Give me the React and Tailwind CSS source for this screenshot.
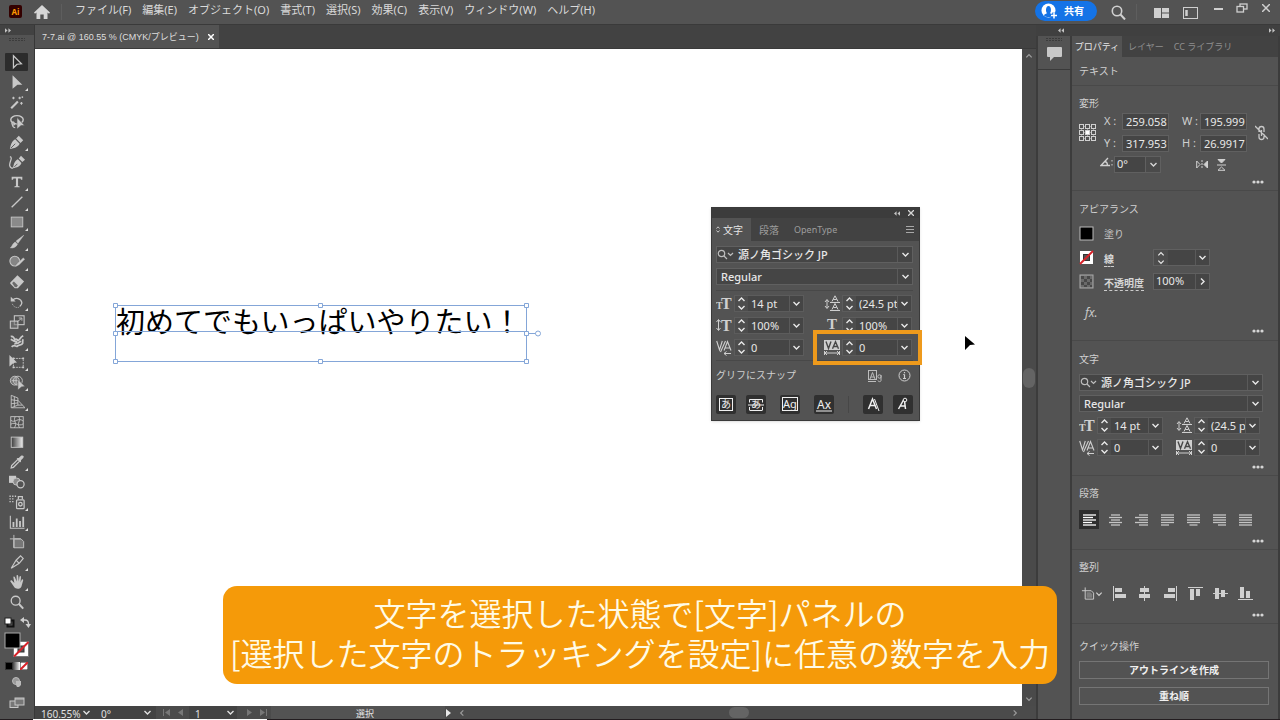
import React from 'react';

/* ---------- small shared drawings ---------- */

const Chevron = ({ dir = 'down', size = 9 }) => {
  const d = {
    down: 'M1.5 3 L4.5 6 L7.5 3',
    up: 'M1.5 6 L4.5 3 L7.5 6',
    right: 'M3 1.5 L6 4.5 L3 7.5',
    left: 'M6 1.5 L3 4.5 L6 7.5',
  }[dir];
  return (
    <svg width={size} height={size} viewBox="0 0 9 9" fill="none" stroke="currentColor" strokeWidth="1.4" aria-hidden="true">
      <path d={d} />
    </svg>
  );
};

const DoubleArrow = ({ left }) => (
  <svg width="6" height="5" viewBox="0 0 7 5" fill="#c4c4c4" aria-hidden="true">
    <path d={left ? 'M3 0v5L0 2.5zM7 0v5L4 2.5z' : 'M0 0v5l3-2.5zM4 0v5l3-2.5z'} />
  </svg>
);

const Grip = () => (
  <svg width="16" height="4" viewBox="0 0 16 4" stroke="#3c3c3c" strokeDasharray="2 1" aria-hidden="true">
    <path d="M0 .5h16M0 2.5h16" />
  </svg>
);

const Glyph = ({ x, y, size, children, bold = true, serif = true, fill = 'currentColor' }) => (
  <text
    x={x}
    y={y}
    fontSize={size}
    fontWeight={bold ? 700 : 400}
    fontFamily={serif ? 'Liberation Serif, serif' : 'Noto Sans, Noto Sans CJK JP, sans-serif'}
    fill={fill}
    stroke="none"
  >
    {children}
  </text>
);

/* ---------- tool bar ---------- */

const pen = 'M1 17 C2 12 3 8 7 6 L12 11 C10 15 6 16 1 17Z M8 5 L11 2 L16 7 L13 10Z';

const tools = [
  ['選択ツール', <path d="M5 2 L14 11 L9 11.500 L5 15.500Z" fill="none" strokeWidth="1.400" />, false],
  ['ダイレクト選択ツール', <path d="M4 1.500 L15 12 L9.500 12 L4 16.500Z" fill="currentColor" stroke="none" />, true],
  ['自動選択ツール', <><path d="M2.500 16 L10 8.500" strokeWidth="2.400" /><path d="M12 3v3M10.500 4.500h3M5 3v3M3.500 4.500h3M14 9v3M12.500 10.500h3" strokeWidth="1.200" /><circle cx="15" cy="3.500" r="1" fill="currentColor" stroke="none" /></>, false],
  ['なげなわツール', <><ellipse cx="9" cy="6.500" rx="7" ry="4.700" strokeWidth="1.600" /><path d="M4 9 C2 11 4 13 6 12 C7 10 4 7.500 3.500 10 C3.500 14 5 15 7 15.500" strokeWidth="1.300" /><path d="M9 4 L17.500 13 L13.500 13 L9 17Z" fill="currentColor" stroke="#535353" strokeWidth=".6" /></>, false],
  ['ペンツール', <><path d={pen} fill="currentColor" stroke="none" /><path d="M2 16 L7 11" stroke="#535353" /></>, true],
  ['曲線ツール', <><path d="M4.500 16 C5.500 10 7 7.500 10 6 L14 10 C12.500 14 9 15 4.500 16Z M11 5 L13.500 2 L18 6.500 L15 9Z" fill="currentColor" stroke="none" /><path d="M6 14.500L9.500 11" stroke="#535353" /><path d="M1 3 C5 4 0 9 .8 13 C1.500 16 3 16 4.500 16" strokeWidth="1.400" /></>, false],
  ['文字ツール', <path d="M3 3h12v3.500h-1.500l-.5-1.500h-2.800v8.500l1.800.5v1H6v-1l1.800-.5V5H5l-.5 1.500H3z" fill="currentColor" stroke="none" />, true],
  ['直線ツール', <path d="M3 15 L15 3" strokeWidth="1.500" />, true],
  ['長方形ツール', <rect x="2.500" y="3.500" width="13" height="11" fill="#8a8a8a" />, true],
  ['ブラシツール', <path d="M16.500 1.500 L8 8 L10 10.500Z M7 9 L9.500 11.500 C8 15 5 16 1.500 15.500 C4 14 3.500 11 7 9Z" fill="currentColor" strokeWidth=".6" />, true],
  ['塗りブラシツール', <><circle cx="6.500" cy="8" r="5.500" fill="#858585" strokeWidth="1.200" /><path d="M7 13 L10 9.500 L16 4 L18 6 L11.500 12.500 L6 15Z" fill="currentColor" stroke="#535353" strokeWidth=".4" /></>, true],
  ['消しゴムツール', <><path d="M9.500 1.500 L17 8.500 L10 16 L6.500 16 L1.500 11 L1.500 9.500Z" fill="currentColor" stroke="none" /><path d="M3.500 10 L5.500 8.500 L10 13 L8.500 14.800 L6.500 14.500Z" fill="#6a6a6a" stroke="none" /></>, true],
  ['回転ツール', <><path d="M4 7 A6 6 0 0 1 14.500 10 A6 6 0 0 1 12 14" strokeWidth="1.400" /><path d="M11 15 A6 6 0 0 1 3.500 10" strokeDasharray="1.200 1.200" /><path d="M2 3v5.500h5.500z" fill="currentColor" stroke="none" /></>, true],
  ['拡大・縮小ツール', <><rect x="6" y="2" width="11" height="10" strokeWidth="1.200" /><rect x="1.500" y="8" width="8.500" height="8" fill="#777" fillOpacity=".6" strokeWidth="1.200" /><path d="M9 9 L14 5 M11 4.500 h3.500 v3" /></>, true],
  ['線幅ツール', <path d="M2 3 C4 2 6 4 6.500 6.500 C8 5 9.500 6 9.500 7.500 C12 7.500 12 4 16 2 M16 6 C14 9 17 9 14.500 11.500 C12 13 11 12 9.500 13.500 C8 15 6 11 3 14.500 M2 6 C5 8 7 9 9 9 M6 11 C9 11 12 9.500 13.500 8" fill="none" strokeWidth="2" />, true],
  ['自由変形ツール', <><rect x="5" y="5" width="11" height="10" strokeDasharray="2 1" /><path d="M4 4h2v2H4zM15 4h2v2h-2zM15 14h2v2h-2zM4 14h2v2H4z" fill="currentColor" stroke="none" /><path d="M.5 1 L9 9.500 L5 10 L.5 14Z" fill="currentColor" stroke="none" /></>, true],
  ['シェイプ形成ツール', <><circle cx="6.500" cy="7.500" r="5" fill="#777" /><circle cx="10" cy="7.500" r="5" /><path d="M3 7.500h9M8 3v9" /><path d="M10 6 L18 14 L14 14.500 L10 18Z" fill="currentColor" stroke="#535353" strokeWidth=".6" /></>, true],
  ['遠近グリッドツール', <path d="M2.500 1.500v14M2.500 1.500 L10 4.500v8L2.500 15.500M6 3v11M2.500 6.500l7.500 1M2.500 11l7.500-1M10 7l8 8.500H3M10 12.500h5" />, true],
  ['メッシュツール', <><rect x="2" y="3" width="14" height="12.500" /><path d="M2 7 C7 11 10 3 16 8 M2 11.500 C7 8 11 15 16 11 M7 3 C4 8 10 10 6 15.500 M11 3 C14 8 8 10 12 15.500" /></>, false],
  ['グラデーションツール', <><defs><linearGradient id="toolGrad"><stop offset="0" stopColor="#3a3a3a" /><stop offset="1" stopColor="#eee" /></linearGradient></defs><rect x="2.500" y="3.500" width="13" height="11.500" fill="url(#toolGrad)" /></>, false],
  ['スポイトツール', <><path d="M10 6 L12 8 L5 15 L2.500 15.500 L3 13Z" strokeWidth="1.500" /><path d="M8.500 4.500 L11 4.500 L13.500 2 C16 1 17.500 3 16 4.500 L13.500 7 L13.500 9.500Z" fill="currentColor" stroke="none" /></>, true],
  ['ブレンドツール', <><rect x="0" y="2" width="8" height="8" fill="currentColor" stroke="none" /><circle cx="8.500" cy="8.500" r="4" fill="#8a8a8a" /><circle cx="13" cy="11.500" r="4" fill="#535353" strokeWidth="1.400" /></>, false],
  ['シンボルスプレーツール', <><rect x="8.500" y="6.500" width="8.500" height="10" rx="1" strokeWidth="1.400" /><path d="M10.500 6V3h4.500V6" strokeWidth="1.400" /><circle cx="12.800" cy="11.500" r="2" strokeWidth="1.500" /><path d="M.5 2.500h7.500M.5 5.500h6M.5 8.500h6" strokeDasharray="1.500 1.500" strokeWidth="1.500" /></>, true],
  ['棒グラフツール', <><path d="M1.500 2v14h16" strokeWidth="1.200" /><path d="M5 14.500V9M8.700 14.500V5M12.400 14.500V8M16 14.500V3" strokeWidth="2" /></>, true],
  ['アートボードツール', <><path d="M5.500 6v9.500h11V8.500l-3-3H6" fill="#777" /><path d="M5.500 1v14.500M1 5.500h12" /></>, false],
  ['スライスツール', <path d="M2.500 16 L8 7 L13 2 L16 5 L11.500 10.500Z M8 7 L11.500 10.500" strokeWidth="1.300" />, true],
  ['手のひらツール', <path d="M6 10 L3 7 C1.500 6.500 1 8 2 9 L6 15 C7 17 13 17.500 14 14 L16 7 C16 5.500 14.500 5.500 14 7 L13 9.500 L13.500 3.500 C13.500 2 12 2 11.700 3.500 L11 8.500 L10.300 2 C10 .7 8.300 1 8.500 2.500 L8.700 8.500 L6.500 3.500 C6 2.300 4.500 3 5 4.300Z" fill="currentColor" stroke="none" />, true],
  ['ズームツール', <><circle cx="7.500" cy="7.500" r="5" strokeWidth="1.500" /><path d="M11 11l5 5.500" strokeWidth="2.200" /></>, false],
];

const ToolBar = () => (
  <aside className="flex w-[35px] shrink-0 flex-col border-r border-[#383838] bg-[#535353] text-[#c8c8c8]">
    <div className="flex h-[10px] shrink-0 items-center bg-[#424242] pl-[5px]"><DoubleArrow /></div>
    <div className="flex h-[18px] shrink-0 justify-center pt-[3px]"><Grip /></div>
    <div className="flex shrink-0 flex-col gap-[2px] pl-[5px]">
      {tools.map(([name, icon, more], i) => (
        <button
          key={name}
          type="button"
          aria-label={name}
          className={`relative flex h-[18px] w-[23px] items-center justify-center rounded-[1px] ${i === 0 ? 'bg-[#2c2c2c]' : ''}`}
        >
          <svg width="16" height="16" viewBox="0 0 18 18" fill="none" stroke="currentColor" strokeWidth="1">{icon}</svg>
          {more && (
            <svg className="absolute right-0 bottom-0" width="3" height="3" viewBox="0 0 3 3" fill="#e0e0e0"><path d="M3 0v3H0z" /></svg>
          )}
        </button>
      ))}
    </div>
    <div className="mt-[6px] flex shrink-0 justify-between pr-[3px] pl-[4px]">
      <button type="button" aria-label="初期設定の塗りと線">
        <svg width="11" height="11" viewBox="0 0 11 11"><rect x="3.500" y="3.500" width="6" height="6" fill="none" stroke="#111" strokeWidth="2" /><rect x="1" y="1" width="6" height="6" fill="#fff" stroke="#222" /></svg>
      </button>
      <button type="button" aria-label="塗りと線を入れ替え">
        <svg width="11" height="11" viewBox="0 0 11 11" fill="none" stroke="#cfcfcf" strokeWidth="1.400"><path d="M3 3h2c2.500 0 3.500 1.500 3.500 4v1" /><path d="M4 0v6L0 3zM5.500 7h5.500L8.500 11z" fill="#cfcfcf" stroke="none" /></svg>
      </button>
    </div>
    <button type="button" aria-label="塗りと線" className="mt-[4px] shrink-0 self-start pl-[4px]">
      <svg width="26" height="26" viewBox="0 0 26 26">
        <rect x="9.500" y="9.500" width="15" height="15" fill="#fff" stroke="#777" />
        <rect x="14" y="14" width="6" height="6" fill="#535353" stroke="#333" />
        <path d="M10 24.500L24.500 10" stroke="#d8232a" strokeWidth="2" />
        <rect x="1" y="1" width="15" height="15" fill="#000" stroke="#aaa" />
      </svg>
    </button>
    <div className="mt-[4px] flex shrink-0 pl-[5px]">
      <button type="button" aria-label="カラー" className="h-[8px] w-[8px] border border-[#333] bg-black" />
      <button type="button" aria-label="グラデーション" className="h-[8px] w-[7px] bg-linear-to-r from-[#444] to-white" />
      <button type="button" aria-label="なし" className="h-[8px] w-[8px]">
        <svg width="8" height="8" viewBox="0 0 8 8"><rect width="8" height="8" fill="#fff" stroke="#222" /><path d="M0 8L8 0" stroke="#d8232a" strokeWidth="2" /></svg>
      </button>
    </div>
    <button type="button" aria-label="描画方法" className="mt-[6px] flex shrink-0 justify-center">
      <svg width="12" height="12" viewBox="0 0 12 12"><circle cx="5" cy="5" r="3.500" fill="#999" stroke="#bbb" /><path d="M5 5h5v4l-2 2H6l-1-2z" fill="#bbb" /></svg>
    </button>
    <button type="button" aria-label="スクリーンモード" className="mt-[9px] flex shrink-0 justify-center">
      <svg width="16" height="12" viewBox="0 0 16 12"><rect x="1" y="4" width="8" height="6.500" fill="#777" stroke="#c8c8c8" /><rect x="6" y="1" width="9" height="7" fill="#777" stroke="#c8c8c8" /><path d="M6 2h9" stroke="#c8c8c8" /></svg>
    </button>
  </aside>
);

/* ---------- menu bar ---------- */

const menus = ['ファイル(F)', '編集(E)', 'オブジェクト(O)', '書式(T)', '選択(S)', '効果(C)', '表示(V)', 'ウィンドウ(W)', 'ヘルプ(H)'];

const MenuBar = () => (
  <header className="flex h-[25px] shrink-0 items-start border-b border-[#3a3a3a] bg-[#535353] text-[#dadada]">
    <div className="flex h-full flex-1 items-start">
      <div className="mt-[5px] ml-[9px] flex h-[13px] w-[13px] items-center justify-center rounded-[2px] bg-[#330000] text-[8px] font-bold text-[#ff9a00]">Ai</div>
      <button type="button" aria-label="ホーム" className="mt-[5px] ml-[12px]">
        <svg width="16" height="15" viewBox="0 0 16 15" fill="#d6d6d6"><path d="M8 0L0 7.500l1 1.200L2.500 7.500V14H6.300V9.500h3.400V14h3.800V7.500L15 8.700l1-1.200z" /></svg>
      </button>
      <div className="mt-[4px] ml-[11px] h-[16px] w-px bg-[#5e5e5e]" />
      <nav className="ml-[13px] flex gap-[11px] text-[11px] leading-[20px] whitespace-nowrap">
        {menus.map((m) => <button key={m} type="button">{m}</button>)}
      </nav>
    </div>
    <div className="flex items-start">
      <button type="button" className="mt-[1px] flex h-[20px] w-[62px] items-center rounded-full bg-[#1473e6] pl-[6px] text-[10px] font-bold text-white">
        <svg width="17" height="16" viewBox="0 0 17 16" className="mr-[6px]"><circle cx="7.500" cy="7.500" r="7" fill="#fff" /><path d="M3 12.500c0-1.500 3-2 3-2.500C4.500 9 4.500 3 7.500 3s3 6 1.500 7c0 .5 3 1 3 2.500C10 14.500 5 14.500 3 12.500z" fill="#1473e6" /><path d="M13 9.500v6M10 12.500h6" stroke="#1473e6" strokeWidth="3.500" /><path d="M13 9.500v6M10 12.500h6" stroke="#fff" strokeWidth="1.500" /></svg>
        共有
      </button>
      <button type="button" aria-label="検索" className="mt-[5px] ml-[14px]">
        <svg width="15" height="15" viewBox="0 0 15 15" fill="none" stroke="#d0d0d0"><circle cx="6" cy="6" r="4.700" strokeWidth="1.600" /><path d="M9.500 9.500l4.500 5" strokeWidth="2" /></svg>
      </button>
      <div className="mt-[4px] ml-[10px] h-[16px] w-px bg-[#5e5e5e]" />
      <button type="button" aria-label="ドキュメントレイアウト" className="mt-[8px] ml-[17px]">
        <svg width="15" height="10" viewBox="0 0 15 10" fill="#cfcfcf"><path d="M0 0h7v10H0zM8 0h7v4.500H8zM8 5.500h7V10H8z" /></svg>
      </button>
      <button type="button" aria-label="ワークスペース" className="mt-[7px] ml-[14px]">
        <svg width="15" height="12" viewBox="0 0 15 12" fill="none" stroke="#cfcfcf"><rect x=".5" y=".5" width="14" height="11" /><path d="M3.500 3v6" strokeWidth="2.500" /></svg>
      </button>
      <button type="button" aria-label="最小化" className="mt-[8px] ml-[16px]">
        <svg width="9" height="3" viewBox="0 0 9 3" fill="#cfcfcf"><path d="M0 0h9v2H0z" /></svg>
      </button>
      <button type="button" aria-label="元に戻す" className="mt-[3px] ml-[13px]">
        <svg width="12" height="10" viewBox="0 0 12 10" fill="none" stroke="#cfcfcf" strokeWidth="1.300"><rect x="4" y="1" width="7" height="5" /><rect x="1" y="3.500" width="6.500" height="5.500" fill="#535353" /></svg>
      </button>
      <button type="button" aria-label="閉じる" className="mt-[4px] mr-[10px] ml-[14px]">
        <svg width="8" height="8" viewBox="0 0 8 8" stroke="#cfcfcf" strokeWidth="1.500"><path d="M0 0l8 8M8 0L0 8" /></svg>
      </button>
    </div>
  </header>
);

/* ---------- form controls ---------- */

const SelectBox = ({ label, value, icon }) => (
  <div className="flex h-[17px] items-stretch border border-[#606060] bg-[#454545] text-[#e8e8e8]">
    {icon && (
      <svg width="18" height="15" viewBox="0 0 18 15" fill="none" stroke="#bdbdbd" strokeWidth="1.200" className="shrink-0"><circle cx="4.500" cy="6.500" r="3.200" /><path d="M7 9l3 3M11 6l2.500 2.500L16 6" /></svg>
    )}
    <select aria-label={label} className={`min-w-0 flex-1 appearance-none bg-transparent text-[11px] leading-[15px] font-medium outline-none ${icon ? 'pl-[3px]' : 'pl-[4px]'}`}>
      <option>{value}</option>
    </select>
    <span className="pointer-events-none flex w-[15px] items-center justify-center border-l border-[#5a5a5a]"><Chevron /></span>
  </div>
);

const Combo = ({ label, value, wide }) => (
  <div className="flex h-[17px] items-stretch border border-[#5c5c5c] bg-[#454545] text-[#e8e8e8]">
    <span className="flex w-[13px] shrink-0 flex-col items-center justify-center bg-[#4d4d4d]">
      <button type="button" aria-label={`${label}を増やす`} className="flex h-[8px] items-center overflow-hidden"><Chevron dir="up" /></button>
      <button type="button" aria-label={`${label}を減らす`} className="flex h-[8px] items-center overflow-hidden"><Chevron /></button>
    </span>
    <input aria-label={label} defaultValue={value} className={`min-w-0 bg-transparent pl-[3px] text-[11px] leading-[15px] outline-none ${wide ? 'w-[41px]' : 'w-[37px]'}`} />
    <button type="button" aria-label={`${label}の一覧`} className="flex w-[14px] shrink-0 items-center justify-center border-l border-[#5a5a5a]"><Chevron /></button>
  </div>
);

const typeIcons = {
  size: <><Glyph x={0} y={14} size={10}>T</Glyph><Glyph x={5} y={14} size={16}>T</Glyph></>,
  leading: <><path d="M3 5v8M1 7l2-2.500L5 7M1 11l2 2.500L5 11M6 7.500h10M6 15.500h10" stroke="currentColor" fill="none" /><path d="M8 6.500L11 .8l3 5.700M9.300 4.500h3.400M8 14.500l3-6 3 6M9.300 12.500h3.400" stroke="currentColor" fill="none" /></>,
  vscale: <><path d="M2.500 3v10M.5 5l2-2.500L4.500 5M.5 11l2 2.500L4.500 11" stroke="currentColor" fill="none" /><Glyph x={5} y={14} size={16}>T</Glyph></>,
  hscale: <><Glyph x={3} y={12} size={15}>T</Glyph><path d="M1 15h14M3 13l-2 2 2 2M13 13l2 2-2 2" stroke="currentColor" fill="none" /></>,
  kerning: <><path d="M.7 2l2.800 9L6.300 2M4.500 13L9.500 2M8 11.500L11.500 2.500 15 11.500M9 9h5" stroke="currentColor" strokeWidth="1.100" fill="none" /><path d="M8 14.500h7M10.500 12.500l-2.500 2 2.500 2" stroke="currentColor" fill="none" /></>,
  tracking: <><rect x="0" y="1" width="16" height="10" fill="currentColor" /><path d="M2 2.500l2.500 7L7 2.500M8.500 9.800l3-7 3 7M9.800 7.500h3.500" stroke="#484848" strokeWidth="1.400" fill="none" /><path d="M1 14h14M3 12l-2 2 2 2M13 12l2 2-2 2M.5 12v4M15.500 12v4" stroke="currentColor" fill="none" /></>,
};

const TypeIcon = ({ kind }) => (
  <svg width="16" height="17" viewBox="0 0 16 17" className="shrink-0 text-[#cfcfcf]" aria-hidden="true">{typeIcons[kind]}</svg>
);

const More = () => (
  <div className="flex h-[8px] justify-end pr-[14px]">
    <button type="button" aria-label="詳細オプション" className="flex items-center">
      <svg width="12" height="4" viewBox="0 0 12 4" fill="#d6d6d6"><circle cx="2" cy="2" r="1.600" /><circle cx="6" cy="2" r="1.600" /><circle cx="10" cy="2" r="1.600" /></svg>
    </button>
  </div>
);

const NumberField = ({ label, value }) => (
  <label className="flex items-center text-[11px] text-[#cfcfcf]">
    <span className="w-[18px]">{label} :</span>
    <input defaultValue={value} className="h-[17px] w-[47px] border border-[#606060] bg-[#454545] pl-[3px] text-[11px] text-[#e8e8e8] outline-none" />
  </label>
);

/* ---------- floating character panel ---------- */

const glyphSnaps = [
  ['仮想ボディ', <><rect x="3.500" y="3.500" width="13" height="12" /><Glyph x={5} y={13} size={10} bold={false} serif={false}>あ</Glyph></>],
  ['仮想ボディの中央', <><path d="M3.500 4.500h13M3.500 15.500h13M2 10h16M3.500 4.500v3M16.500 4.500v3M3.500 12v3M16.500 12v3" /><Glyph x={5} y={13} size={10} bold={false} serif={false}>あ</Glyph></>],
  ['字形の境界', <><rect x="2.500" y="2.500" width="15" height="13" /><Glyph x={3} y={13} size={11} bold={false} serif={false}>Ag</Glyph></>],
  ['ベースライン', <><Glyph x={3} y={14} size={12} bold={false} serif={false}>Ax</Glyph><path d="M2 16h16" /></>],
];

const PanelDivider = () => <div className="h-px bg-[#484848]" />;

const CharacterPanel = () => (
  <section className="absolute top-[158px] left-[676px] w-[209px] border border-[#3a3a3a] bg-[#535353] text-[#d6d6d6] shadow-sm">
    <div className="flex h-[10px] items-center justify-end gap-[8px] bg-[#3c3c3c] pr-[5px]">
      <button type="button" aria-label="パネルをたたむ" className="flex"><DoubleArrow left /></button>
      <button type="button" aria-label="パネルを閉じる"><svg width="6" height="6" viewBox="0 0 6 6" stroke="#d6d6d6" strokeWidth="1.300"><path d="M0 0l6 6M6 0L0 6" /></svg></button>
    </div>
    <div className="flex h-[23px] items-stretch bg-[#424242] text-[10px] leading-[20px]">
      <button type="button" className="flex w-[39px] items-center gap-[3px] bg-[#535353] pl-[4px] text-[#e4e4e4]">
        <svg width="4" height="7" viewBox="0 0 4 7" fill="none" stroke="currentColor" strokeWidth=".8"><path d="M.5 2.500L2 .8l1.500 1.700M.5 4.500L2 6.200l1.500-1.700" /></svg>文字
      </button>
      <button type="button" className="ml-[8px] text-[#9d9d9d]">段落</button>
      <button type="button" className="ml-[15px] text-[9px] text-[#9d9d9d]">OpenType</button>
      <button type="button" aria-label="パネルメニュー" className="mr-[5px] ml-auto"><svg width="8" height="7" viewBox="0 0 8 7" stroke="#a8a8a8"><path d="M0 .5h8M0 3.500h8M0 6.500h8" /></svg></button>
    </div>
    <div className="pt-[5px] pr-[6px] pl-[4px]">
      <SelectBox label="フォントファミリ" value="源ノ角ゴシック JP" icon />
      <div className="h-[5px]" />
      <SelectBox label="フォントスタイル" value="Regular" />
      <div className="h-[5px]" />
      <PanelDivider />
      <div className="mt-[4px] grid grid-cols-[108px_1fr] gap-y-[5px]">
        {[
          ['size', 'フォントサイズ', '14 pt'],
          ['leading', '行送り', '(24.5 pt)'],
          ['vscale', '垂直比率', '100%'],
          ['hscale', '水平比率', '100%'],
          ['kerning', 'カーニング', '0'],
          ['tracking', 'トラッキング', '0'],
        ].map(([kind, label, value]) => (
          <div key={kind} className="flex items-center gap-[2px]"><TypeIcon kind={kind} /><Combo label={label} value={value} wide /></div>
        ))}
      </div>
      <div className="mt-[4px]"><PanelDivider /></div>
      <div className="flex h-[29px] items-center text-[10px] text-[#cfcfcf]">
        <span className="flex-1">グリフにスナップ</span>
        <svg width="15" height="14" viewBox="0 0 15 14" fill="none" stroke="#bdbdbd"><rect x=".5" y="1.500" width="8" height="9" /><path d="M2 10L4.500 3.500 7 10M3 8h3" /><path d="M13 6v5.500c0 1.500-3 1.500-3 0" /><circle cx="11.500" cy="7.500" r="1.700" /><path d="M0 12.500h8" /></svg>
        <svg width="13" height="13" viewBox="0 0 13 13" fill="none" stroke="#cfcfcf" className="mr-[2px] ml-[15px]"><circle cx="6.500" cy="6.500" r="5.500" /><path d="M6.500 5.500v4M5 9.500h3M5.300 5.500h1.200M6.500 3v1.300" strokeWidth="1.200" /></svg>
      </div>
      <div className="flex items-center pt-[5px] pb-[6px] text-[#f0f0f0]">
        {glyphSnaps.map(([name, icon], i) => (
          <button key={name} type="button" aria-label={name} className={`rounded-[2px] bg-[#303030] ${i === 0 ? '' : i === 1 ? 'ml-[10px]' : 'ml-[14px]'}`}>
            <svg width="20" height="19" viewBox="0 0 20 19" fill="none" stroke="currentColor">{icon}</svg>
          </button>
        ))}
        <div className="mx-auto h-[17px] w-px bg-[#474747]" />
        <button type="button" aria-label="角度のガイド" className="rounded-[2px] bg-[#303030]"><svg width="20" height="19" viewBox="0 0 20 19" fill="none" stroke="currentColor"><path d="M5.500 14L9.500 4l4 10M7 10.500h5" strokeWidth="1.500" /><path d="M11.500 4l4.500 12" /></svg></button>
        <button type="button" aria-label="アンカーポイント" className="ml-[10px] rounded-[2px] bg-[#303030]"><svg width="20" height="19" viewBox="0 0 20 19" fill="none" stroke="currentColor"><path d="M5.500 14l5-9M11.500 6l1 8M7.500 11h4.500" strokeWidth="1.500" /><circle cx="12" cy="5" r="1.800" fill="#303030" /></svg></button>
      </div>
    </div>
  </section>
);

/* ---------- document area ---------- */

const Artboard = () => (
  <main className="relative min-h-0 flex-1 overflow-hidden bg-white">
    <div className="absolute top-[256px] left-[81px] h-[58px] w-[412px]">
      <p className="font-['Noto_Sans_CJK_JP',sans-serif] text-[29px] leading-[30px] whitespace-nowrap text-black">初めてでもいっぱいやりたい！</p>
      <svg className="absolute -top-[3px] -left-[4px]" width="430" height="64" viewBox="0 0 430 64" fill="none" stroke="#84a6d8" aria-hidden="true">
        <rect x="3.500" y="3.500" width="411" height="56" />
        <path d="M3.500 29.500h411M414.500 31.500h10" />
        <g fill="#fff">
          <path d="M1.500 1.500h4v4h-4zM206.500 1.500h4v4h-4zM412.500 1.500h4v4h-4zM1.500 29.500h4v4h-4zM412.500 29.500h4v4h-4zM1.500 57.500h4v4h-4zM206.500 57.500h4v4h-4zM412.500 57.500h4v4h-4z" />
          <circle cx="426" cy="31.500" r="2.500" />
        </g>
      </svg>
    </div>
    <CharacterPanel />
    <div className="absolute top-[281px] left-[778px] h-[35px] w-[109px] border-4 border-[#ee9a1c]" />
    <svg className="absolute top-[287px] left-[930px]" width="10" height="14" viewBox="0 0 10 14" aria-hidden="true"><path d="M0 0L10 8.500L5 9L0 14Z" fill="#000" /></svg>
  </main>
);

const StatusBar = () => (
  <footer className="flex h-[13px] shrink-0 items-center overflow-hidden bg-[#4b4b4b] text-[10px] leading-[18px] text-[#e0e0e0]">
    <div className="flex h-full w-[60px] items-center justify-between bg-[#434343] pr-[4px] pl-[6px]"><span className="pt-[3px]">160.55%</span><Chevron /></div>
    <div className="flex h-full w-[61px] items-center justify-between bg-[#434343] pr-[4px] pl-[6px]"><span className="pt-[3px]">0°</span><Chevron /></div>
    <svg className="ml-[6px]" width="23" height="7" viewBox="0 0 23 7" fill="#777"><path d="M1 0h1v7H1zM8 0v7L3 3.500zM21 0v7l-5-3.500z" /></svg>
    <div className="ml-[4px] flex h-full w-[48px] items-center justify-between bg-[#434343] pr-[2px] pl-[6px]"><span className="pt-[3px]">1</span><Chevron /></div>
    <svg className="ml-[8px]" width="23" height="7" viewBox="0 0 23 7" fill="#777"><path d="M2 0v7l5-3.500zM15 0v7l5-3.500zM21 0h1v7h-1z" /></svg>
    <div className="ml-[3px] flex h-full w-[174px] items-center justify-center bg-[#535353] text-[9px]"><span className="pt-[2px] pl-[14px]">選択</span></div>
    <svg className="ml-[1px] shrink-0" width="5" height="8" viewBox="0 0 5 8" fill="#e8e8e8"><path d="M0 0l5 4-5 4z" /></svg>
    <span className="ml-[7px] text-[#999]"><Chevron dir="left" size={8} /></span>
    <div className="flex flex-1 justify-center"><div className="h-[11px] w-[20px] rounded-full bg-[#646464]" /></div>
    <span className="mr-[17px] text-[#999]"><Chevron dir="right" size={8} /></span>
  </footer>
);

const DocumentArea = () => (
  <div className="flex min-w-0 flex-1 flex-col">
    <div className="flex h-[24px] shrink-0 border-b border-[#3a3a3a] bg-[#424242]">
      <div className="flex w-[184px] items-center justify-between bg-[#535353] pr-[5px] pl-[7px] text-[#dedede]">
        <span className="font-['Liberation_Sans','Noto_Sans_CJK_JP',sans-serif] text-[9px] leading-[14px] whitespace-nowrap">7-7.ai @ 160.55 % (CMYK/プレビュー)</span>
        <button type="button" aria-label="タブを閉じる"><svg width="6" height="6" viewBox="0 0 6 6" stroke="#fff" strokeWidth="1.500"><path d="M0 0l6 6M6 0L0 6" /></svg></button>
      </div>
    </div>
    <div className="flex min-h-0 flex-1">
      <Artboard />
      <div className="flex w-[14px] shrink-0 flex-col items-center justify-between bg-[#4a4a4a] py-[3px] text-[#a0a0a0]">
        <Chevron dir="up" size={8} />
        <div className="h-[20px] w-[12px] rounded-full bg-[#646464]" />
        <Chevron size={8} />
      </div>
    </div>
    <StatusBar />
  </div>
);

/* ---------- properties panel ---------- */

const Section = ({ title, className, children }) => (
  <section className={`border-b border-[#494949] pl-[7px] ${className}`}>
    <h2 className="text-[10px] leading-[16px] text-[#d0d0d0]">{title}</h2>
    {children}
  </section>
);

const paragraphAligns = [
  ['左揃え', [13, 10, 13, 9, 13], 0],
  ['中央揃え', [9, 13, 9, 13, 9], 1],
  ['右揃え', [9, 13, 9, 13, 9], 2],
  ['均等配置（最終行左揃え）', [13, 13, 13, 13, 8], 0],
  ['均等配置（最終行中央揃え）', [13, 13, 13, 13, 8], 1],
  ['均等配置（最終行右揃え）', [13, 13, 13, 13, 8], 2],
  ['両端揃え', [13, 13, 13, 13, 13], 0],
];

const objectAligns = [
  ['水平方向左に整列', 'M0 0h1v15H0zM2 2h7v4H2zM2 8h11v4H2z'],
  ['水平方向中央に整列', 'M6 0h1v15H6zM2 2h9v4H2zM1 8h11v4H1z'],
  ['水平方向右に整列', 'M13 0h1v15h-1zM5 2h7v4H5zM1 8h11v4H1z'],
  ['垂直方向上に整列', 'M0 1h15v1H0zM2 3h4v11H2zM8 3h4v7H8z'],
  ['垂直方向中央に整列', 'M0 7h15v1H0zM2 2h4v11H2zM8 4h4v7H8z'],
  ['垂直方向下に整列', 'M0 13h15v1H0zM2 1h4v11H2zM8 5h4v7H8z'],
];

const reference = [1, 7, 13].flatMap((x) => [1, 7, 13].map((y) => [x, y]));

const PropertiesPanel = () => (
  <aside className="flex w-[210px] shrink-0 flex-col border-r-2 border-l-2 border-[#3c3c3c] bg-[#535353] text-[#d6d6d6]">
    <div className="flex h-[21px] shrink-0 items-stretch bg-[#424242] text-[9px] leading-[18px] whitespace-nowrap text-[#8f8f8f]">
      <button type="button" className="w-[50px] bg-[#535353] text-[#e8e8e8]">プロパティ</button>
      <button type="button" className="ml-[6px]">レイヤー</button>
      <button type="button" className="ml-[10px]">CC ライブラリ</button>
    </div>

    <Section title="テキスト" className="h-[29px] shrink-0 pt-[6px]" />

    <Section title="変形" className="h-[105px] shrink-0 pt-[9px]">
      <div className="mt-[2px] flex items-center">
        <svg width="17" height="17" viewBox="0 0 17 17" fill="none" stroke="#d0d0d0" className="shrink-0">
          <path d="M2.500 2.500h12v12h-12zM8.500 2.500v12M2.500 8.500h12" strokeDasharray="1 1" />
          {reference.map(([x, y]) => <rect key={`${x}-${y}`} x={x - 0.5} y={y - 0.5} width="4" height="4" fill={x === 7 && y === 7 ? '#fff' : '#535353'} />)}
        </svg>
        <div className="ml-[8px] grid grid-cols-[78px_1fr] gap-y-[5px]">
          <NumberField label="X" value="259.058" />
          <NumberField label="W" value="195.999" />
          <NumberField label="Y" value="317.953" />
          <NumberField label="H" value="26.9917" />
        </div>
        <button type="button" aria-label="縦横比を固定" className="ml-[8px]">
          <svg width="13" height="16" viewBox="0 0 13 16" fill="none" stroke="#c8c8c8" strokeWidth="1.300"><path d="M4 7V4a2.500 2.500 0 0 1 5 0v3M4 9v3a2.500 2.500 0 0 0 5 0V9M6.500 5v6M0 1l13 13" /></svg>
        </button>
      </div>
      <div className="mt-[4px] flex h-[17px] items-stretch">
        <svg width="14" height="14" viewBox="0 0 14 14" fill="none" stroke="#d0d0d0" className="ml-[21px]"><path d="M8 2L1 9.500h9M5 5.500c2 .5 2.500 2 2.500 4" strokeWidth="1.300" /><path d="M12 4v1.500M12 8v1.500" /></svg>
        <input aria-label="回転" defaultValue="0°" className="w-[32px] border border-[#606060] bg-[#454545] pl-[2px] text-[11px] text-[#e8e8e8] outline-none" />
        <button type="button" aria-label="回転の一覧" className="flex w-[15px] items-center justify-center border border-l-0 border-[#606060] bg-[#4a4a4a]"><Chevron /></button>
        <button type="button" aria-label="水平方向に反転" className="ml-[35px]"><svg width="12" height="9" viewBox="0 0 12 9" fill="none" stroke="#d0d0d0"><path d="M.7 1v7L4 4.500z" /><path d="M6 0v9" strokeDasharray="2 1" /><path d="M11.500 1v7L8 4.500z" fill="#d0d0d0" /></svg></button>
        <button type="button" aria-label="垂直方向に反転" className="ml-[9px]"><svg width="9" height="12" viewBox="0 0 9 12" fill="none" stroke="#d0d0d0"><path d="M1 .5h7L4.500 4z" fill="#d0d0d0" /><path d="M0 6h9" /><path d="M1 11.300h7L4.500 8z" /></svg></button>
      </div>
      <div className="mt-[5px]"><More /></div>
    </Section>

    <Section title="アピアランス" className="h-[150px] shrink-0 pt-[10px]">
      <div className="mt-[5px] flex h-[22px] items-center">
        <svg width="15" height="15" viewBox="0 0 15 15"><rect x="1" y="1" width="13" height="13" fill="#000" stroke="#bbb" /></svg>
        <button type="button" className="ml-[10px] pt-[3px] text-[10px] text-[#c8c8c8]">塗り</button>
      </div>
      <div className="mt-[2px] flex h-[22px] items-center">
        <svg width="15" height="15" viewBox="0 0 15 15"><rect x="1" y="1" width="13" height="13" fill="#fff" /><rect x="4.500" y="4.500" width="6" height="6" fill="#535353" stroke="#333" /><path d="M1 14L14 1" stroke="#d8232a" strokeWidth="2" /></svg>
        <button type="button" className="ml-[10px] w-[49px] pt-[3px] text-left text-[10px] leading-[14px] font-bold"><span className="border-b border-dashed border-[#ccc]">線</span></button>
        <div className="flex h-[17px] border border-[#606060] bg-[#454545] text-[#e8e8e8]">
          <span className="flex w-[14px] flex-col items-center justify-center bg-[#4d4d4d]">
            <button type="button" aria-label="線幅を増やす" className="h-[8px]"><Chevron dir="up" size={8} /></button>
            <button type="button" aria-label="線幅を減らす" className="h-[7px]"><Chevron size={8} /></button>
          </span>
          <input aria-label="線幅" className="w-[27px] outline-none" />
          <button type="button" aria-label="線幅の一覧" className="flex w-[14px] items-center justify-center border-l border-[#5a5a5a]"><Chevron /></button>
        </div>
      </div>
      <div className="mt-[2px] flex h-[22px] items-center">
        <svg width="15" height="15" viewBox="0 0 15 15"><rect x="1" y="1" width="13" height="13" fill="#6a6a6a" stroke="#aaa" /><path d="M2 2h3v3H2zM8 2h3v3H8zM5 5h3v3H5zM11 5h2v3h-2zM2 8h3v3H2zM8 8h3v3H8zM5 11h3v2H5zM11 11h2v2h-2z" fill="#484848" /></svg>
        <button type="button" className="ml-[10px] w-[49px] pt-[3px] text-left text-[10px] leading-[14px] font-bold whitespace-nowrap"><span className="border-b border-dashed border-[#ccc]">不透明度</span></button>
        <div className="flex h-[17px] border border-[#606060] bg-[#454545] text-[#e8e8e8]">
          <input aria-label="不透明度" defaultValue="100%" className="w-[41px] pl-[2px] text-[11px] outline-none" />
          <button type="button" aria-label="不透明度スライダー" className="flex w-[14px] items-center justify-center border-l border-[#5a5a5a]"><Chevron dir="right" /></button>
        </div>
      </div>
      <button type="button" className="mt-[12px] block pl-[6px] text-[12px] leading-[18px] text-[#c8c8c8] italic">fx.</button>
      <div className="mt-[5px]"><More /></div>
    </Section>

    <Section title="文字" className="h-[135px] shrink-0 pt-[10px]">
      <div className="mt-[7px] mr-[15px]"><SelectBox label="フォントファミリ" value="源ノ角ゴシック JP" icon /></div>
      <div className="mt-[4px] mr-[15px]"><SelectBox label="フォントスタイル" value="Regular" /></div>
      <div className="mt-[5px] grid grid-cols-[97px_1fr] gap-y-[5px]">
        {[
          ['size', 'フォントサイズ', '14 pt'],
          ['leading', '行送り', '(24.5 pt)'],
          ['kerning', 'カーニング', '0'],
          ['tracking', 'トラッキング', '0'],
        ].map(([kind, label, value]) => (
          <div key={kind} className="flex items-center gap-[2px]"><TypeIcon kind={kind} /><Combo label={label} value={value} /></div>
        ))}
      </div>
      <div className="mt-[7px]"><More /></div>
    </Section>

    <Section title="段落" className="h-[74px] shrink-0 pt-[9px]">
      <div className="mt-[9px] flex gap-[6px]">
        {paragraphAligns.map(([name, widths, side], i) => (
          <button key={name} type="button" aria-label={name} className={`flex h-[19px] w-[20px] items-center justify-center ${i === 0 ? 'bg-[#2e2e2e] text-white' : 'text-[#c4c4c4]'}`}>
            <svg width="13" height="12" viewBox="0 0 13 12" stroke="currentColor" strokeWidth="1.300">
              {widths.map((w, k) => <path key={k} d={`M${((13 - w) * side) / 2} ${k * 2.5 + 1}h${w}`} />)}
            </svg>
          </button>
        ))}
      </div>
      <div className="mt-[8px]"><More /></div>
    </Section>

    <Section title="整列" className="h-[74px] shrink-0 pt-[9px]">
      <div className="mt-[11px] flex items-center pl-[2px] text-[#d0d0d0]">
        <button type="button" aria-label="整列の対象" className="flex items-center">
          <svg width="14" height="14" viewBox="0 0 15 14" fill="none" stroke="currentColor"><path d="M4.500 0v12.500h9V6l-2.500-2.500H1" /><path d="M6 5h4l2 2v4H6z" fill="#7c7c7c" stroke="none" /></svg><Chevron size={8} />
        </button>
        <span className="ml-[10px] flex gap-[10px]">
          {objectAligns.map(([name, d]) => (
            <button key={name} type="button" aria-label={name}><svg width="15" height="15" viewBox="0 0 15 15" fill="#cfcfcf"><path d={d} /></svg></button>
          ))}
        </span>
      </div>
      <div className="mt-[10px]"><More /></div>
    </Section>

    <section className="pt-[14px] pr-[9px] pl-[7px]">
      <h2 className="text-[10px] leading-[16px] text-[#d0d0d0]">クイック操作</h2>
      <button type="button" className="mt-[7px] block h-[18px] w-full border border-[#757575] text-[10px] leading-[16px] font-bold text-[#f0f0f0]">アウトラインを作成</button>
      <button type="button" className="mt-[8px] block h-[18px] w-full border border-[#757575] text-[10px] leading-[16px] font-bold text-[#f0f0f0]">重ね順</button>
    </section>
  </aside>
);

const RightDock = () => (
  <div className="flex shrink-0 flex-col">
    <div className="flex h-[11px] shrink-0 items-center justify-between bg-[#404040] pr-[5px] pl-[22px]"><DoubleArrow left /><DoubleArrow /></div>
    <div className="flex min-h-0 flex-1">
      <div className="w-[34px] shrink-0 border-l-2 border-[#3c3c3c] bg-[#535353]">
        <div className="flex h-[34px] flex-col items-center gap-[5px] border-b border-[#3a3a3a] pt-[2px]">
          <Grip />
          <button type="button" aria-label="コメント"><svg width="15" height="15" viewBox="0 0 15 15" fill="#c8c8c8"><path d="M1 0h13a1 1 0 0 1 1 1v8a1 1 0 0 1-1 1H7l-4 4v-4H1a1 1 0 0 1-1-1V1a1 1 0 0 1 1-1z" /></svg></button>
        </div>
      </div>
      <PropertiesPanel />
    </div>
  </div>
);

export default function App() {
  return (
    <div className="relative flex h-screen flex-col overflow-hidden bg-[#535353] font-['Noto_Sans','Noto_Sans_CJK_JP',sans-serif]">
      <MenuBar />
      <div className="flex min-h-0 flex-1">
        <ToolBar />
        <DocumentArea />
        <RightDock />
      </div>
      <div className="flex h-px shrink-0 bg-[#231d20]"><div className="ml-[33px] w-[234px] bg-white" /></div>
      <div className="absolute bottom-[36px] left-1/2 w-[834px] -translate-x-1/2 rounded-[14px] bg-[#f59a09] pt-[6px] pb-[12px] text-center font-['Noto_Sans_CJK_JP',sans-serif] text-[32px] leading-[40px] font-[350] whitespace-nowrap text-[#fffbe6]">
        <p>文字を選択した状態で[文字]パネルの</p>
        <p>[選択した文字のトラッキングを設定]に任意の数字を入力</p>
      </div>
    </div>
  );
}
